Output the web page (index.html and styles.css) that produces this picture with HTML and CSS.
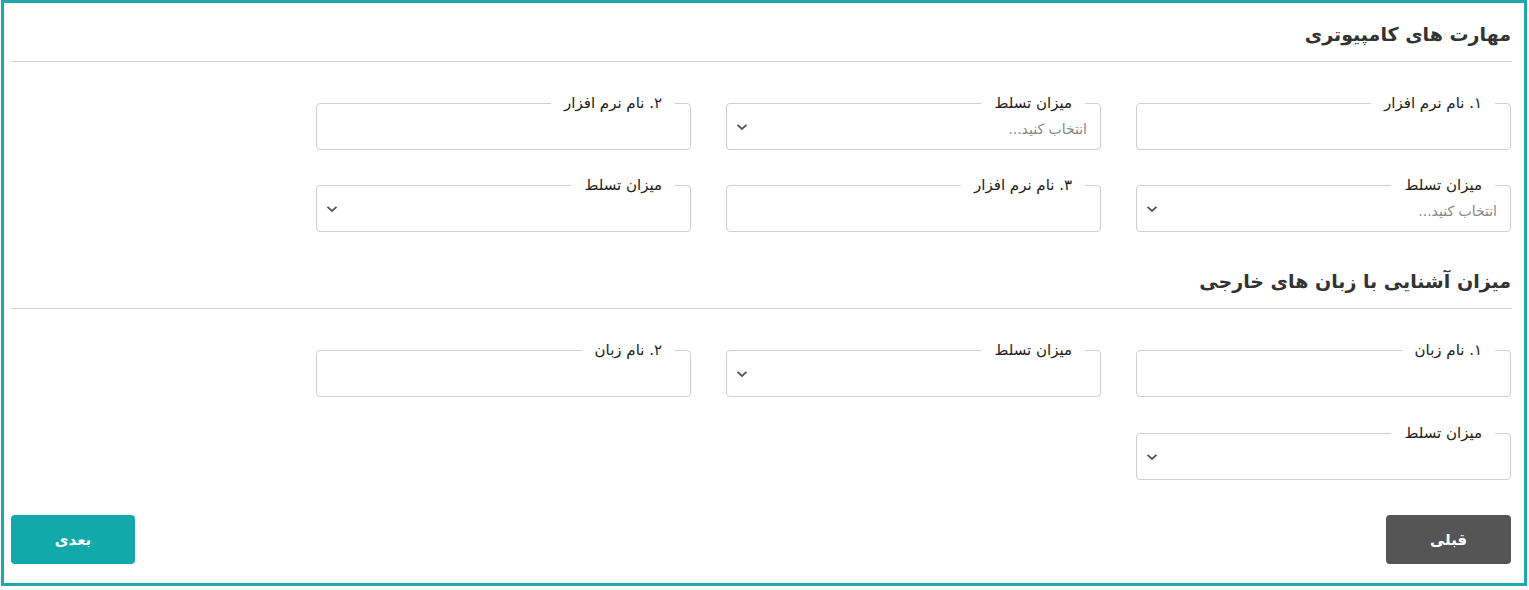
FILE: index.html
```html
<!DOCTYPE html>
<html lang="fa" dir="rtl">
<head>
<meta charset="utf-8">
<link rel="stylesheet" href="styles.css">
</head>
<body>
<div class="card">
  <section class="section">
    <h2 class="title">مهارت های کامپیوتری</h2>
    <hr class="rule">
    <div class="grid">
      <div class="field"><span class="label">۱. نام نرم افزار</span><div class="control"></div></div>
      <div class="field"><span class="label">میزان تسلط</span><div class="control select"><span class="ph">انتخاب کنید...</span><svg class="chev" width="12" height="8" viewBox="0 0 12 8"><path d="M1.5 1.8 L6 6 L10.5 1.8" fill="none" stroke="#555" stroke-width="1.8"/></svg></div></div>
      <div class="field"><span class="label">۲. نام نرم افزار</span><div class="control"></div></div>
      <div class="field"><span class="label">میزان تسلط</span><div class="control select"><span class="ph">انتخاب کنید...</span><svg class="chev" width="12" height="8" viewBox="0 0 12 8"><path d="M1.5 1.8 L6 6 L10.5 1.8" fill="none" stroke="#555" stroke-width="1.8"/></svg></div></div>
      <div class="field"><span class="label">۳. نام نرم افزار</span><div class="control"></div></div>
      <div class="field"><span class="label">میزان تسلط</span><div class="control select"><span class="ph"></span><svg class="chev" width="12" height="8" viewBox="0 0 12 8"><path d="M1.5 1.8 L6 6 L10.5 1.8" fill="none" stroke="#555" stroke-width="1.8"/></svg></div></div>
    </div>
  </section>
  <section class="section second">
    <h2 class="title">میزان آشنایی با زبان های خارجی</h2>
    <hr class="rule">
    <div class="grid">
      <div class="field"><span class="label">۱. نام زبان</span><div class="control"></div></div>
      <div class="field"><span class="label">میزان تسلط</span><div class="control select"><span class="ph"></span><svg class="chev" width="12" height="8" viewBox="0 0 12 8"><path d="M1.5 1.8 L6 6 L10.5 1.8" fill="none" stroke="#555" stroke-width="1.8"/></svg></div></div>
      <div class="field"><span class="label">۲. نام زبان</span><div class="control"></div></div>
      <div class="field"><span class="label">میزان تسلط</span><div class="control select"><span class="ph"></span><svg class="chev" width="12" height="8" viewBox="0 0 12 8"><path d="M1.5 1.8 L6 6 L10.5 1.8" fill="none" stroke="#555" stroke-width="1.8"/></svg></div></div>
    </div>
  </section>
  <div class="actions">
    <button class="btn prev">قبلی</button>
    <button class="btn next">بعدی</button>
  </div>
</div>
</body>
</html>
```
FILE: styles.css
```css
* { box-sizing: border-box; }
html, body { margin: 0; padding: 0; background: #fff; }
body {
  font-family: "DejaVu Sans", "Noto Sans", sans-serif;
  color: #333;
  width: 1529px;
}
.card {
  margin: 0 2px 0 1px;
  border: 3px solid #1fa7a9;
  padding: 0 12px 19px 7px;
}
.title {
  margin: 0;
  height: 58px;
  line-height: 62px;
  font-size: 19px;
  font-weight: bold;
  color: #333;
  padding-right: 1px;
}
.second .title { margin-top: 18px; }
.rule {
  margin: 0;
  border: 0;
  border-top: 1px solid #d4d4d4;
  height: 0;
}
.grid {
  margin-top: 41px;
  display: grid;
  grid-template-columns: repeat(3, 375px);
  column-gap: 35px;
  row-gap: 35px;
  padding-right: 1px;
}
.second .grid { row-gap: 36px; }
.field {
  position: relative;
  height: 47px;
  border: 1px solid #cfcfcf;
  border-radius: 4px;
}
.label {
  position: absolute;
  top: -10px;
  right: 15px;
  padding: 0 13px;
  background: #fff;
  font-size: 15px;
  line-height: 18px;
  color: #222;
  white-space: nowrap;
}
.control {
  height: 100%;
}
.select {
  display: flex;
  align-items: center;
  justify-content: space-between;
  padding: 0 13px 0 9px;
}
.ph {
  font-size: 14px;
  color: #888;
  padding-top: 4px;
}
.chev { display: block; }
.actions {
  margin-top: 35px;
  display: flex;
  justify-content: space-between;
  padding-right: 1px;
}
.btn {
  width: 125px;
  height: 49px;
  border: 0;
  border-radius: 4px;
  color: #fff;
  font-family: "DejaVu Sans", sans-serif;
  font-weight: bold;
  font-size: 15px;
}
.prev { background: #555555; }
.next { background: #12a9aa; width: 124px; }
```
